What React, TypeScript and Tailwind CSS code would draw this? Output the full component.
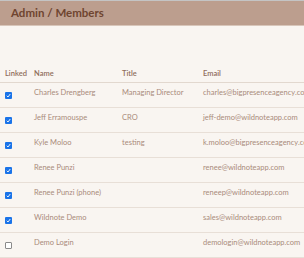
import React from 'react'

type Member = {
  linked: boolean
  name: string
  title: string
  email: string
}

const members: Member[] = [
  { linked: true, name: 'Charles Drengberg', title: 'Managing Director', email: 'charles@bigpresenceagency.com' },
  { linked: true, name: 'Jeff Erramouspe', title: 'CRO', email: 'jeff-demo@wildnoteapp.com' },
  { linked: true, name: 'Kyle Moloo', title: 'testing', email: 'k.moloo@bigpresenceagency.com' },
  { linked: true, name: 'Renee Punzi', title: '', email: 'renee@wildnoteapp.com' },
  { linked: true, name: 'Renee Punzi (phone)', title: '', email: 'reneep@wildnoteapp.com' },
  { linked: true, name: 'Wildnote Demo', title: '', email: 'sales@wildnoteapp.com' },
  { linked: false, name: 'Demo Login', title: '', email: 'demologin@wildnoteapp.com' },
]

function Check({ on }: { on: boolean }) {
  if (!on) {
    return <div className="w-[7px] h-[7px] rounded-[1px] border border-[#8a8a8a] bg-white" />
  }
  return (
    <div className="w-[7px] h-[7px] rounded-[1px] bg-[#1a73e8] flex items-center justify-center">
      <svg width="5" height="5" viewBox="0 0 10 10">
        <path d="M1.5 5.5 L4 8 L8.5 2" stroke="white" strokeWidth="1.8" fill="none" />
      </svg>
    </div>
  )
}

export default function App() {
  return (
    <div
      className="w-[304px] h-[258px] overflow-hidden bg-[#f9f5f1] border-t border-[#c4c4c4]"
      style={{ fontFamily: 'Lato, "Open Sans", sans-serif' }}
    >
      <div className="h-[25px] bg-[#bc9e8e] border-b border-[#d8c6ba] flex items-center pl-[11px]">
        <span className="text-[11.5px] font-bold text-[#6f4530]">Admin / Members</span>
      </div>
      <div className="h-[57px] border-b border-[#e2d8cf] grid grid-cols-[29px_88px_81px_1fr] pl-[5px] items-end pb-[3px] text-[7.5px] font-semibold text-[#8e6c5a]">
        <div>Linked</div>
        <div>Name</div>
        <div>Title</div>
        <div>Email</div>
      </div>
      {members.map((m) => (
        <div
          key={m.email}
          className="h-[25px] border-b border-[#e8dfd7] grid grid-cols-[29px_88px_81px_1fr] pl-[5px] text-[7.5px] text-[#a98b7b]"
        >
          <div className="pt-[9px]">
            <Check on={m.linked} />
          </div>
          <div className="pt-[4px] whitespace-nowrap">{m.name}</div>
          <div className="pt-[4px] whitespace-nowrap">{m.title}</div>
          <div className="pt-[4px] whitespace-nowrap">{m.email}</div>
        </div>
      ))}
    </div>
  )
}
